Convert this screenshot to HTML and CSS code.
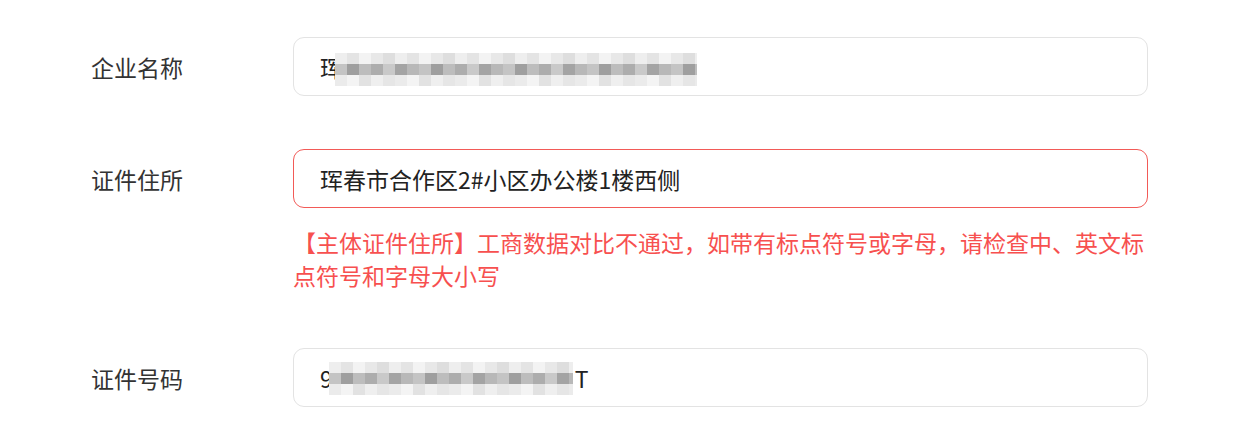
FILE: index.html
```html
<!DOCTYPE html>
<html lang="zh-CN">
<head>
  <meta charset="UTF-8">
  <title>企业信息</title>
  <link rel="stylesheet" href="styles.css">
</head>
<body>

  <div class="form">
    <div class="form-item">
      <label class="label">企业名称</label>
      <div class="field">
        <span class="value">珲</span>
        <span class="mosaic mosaic-name"></span>
      </div>
    </div>

    <div class="form-item">
      <label class="label">证件住所</label>
      <div class="field is-error">
        <span class="value">珲春市合作区2#小区办公楼1楼西侧</span>
      </div>
      <div class="error-msg">【主体证件住所】工商数据对比不通过，如带有标点符号或字母，请检查中、英文标点符号和字母大小写</div>
    </div>

    <div class="form-item">
      <label class="label">证件号码</label>
      <div class="field">
        <span class="value">9</span>
        <span class="mosaic mosaic-code"></span>
        <span class="value tail">T</span>
      </div>
    </div>
  </div>

</body>
</html>
```

FILE: styles.css
```css
:root {
  --text-color: #333333;
  --border: #e3e3e3;
  --danger: #f25a57;
  --danger-text: #f7504f;
}

body {
  margin: 0;
  background: #ffffff;
  font-family: "Noto Sans CJK SC", "Noto Sans", sans-serif;
  color: var(--text-color);
}

.form {
  padding: 37px 0 0 91px;
}

.form-item {
  display: grid;
  grid-template-columns: 202px 855px;
  margin-bottom: 53px;
}

.form-item:last-child {
  margin-bottom: 0;
}

.label {
  grid-column: 1;
  grid-row: 1;
  align-self: center;
  font-size: 23px;
  line-height: 30px;
  color: #333;
}

.field {
  grid-column: 2;
  grid-row: 1;
  box-sizing: border-box;
  height: 59px;
  border: 1px solid var(--border);
  border-radius: 11px;
  padding: 0 26px;
  display: flex;
  align-items: center;
  overflow: hidden;
}

.field.is-error {
  border-color: var(--danger);
}

.value {
  font-size: 23px;
  line-height: 30px;
  color: #222;
  white-space: nowrap;
}

.error-msg {
  grid-column: 2;
  grid-row: 2;
  padding: 18px 0 3px;
  font-size: 23px;
  line-height: 33px;
  color: var(--danger-text);
}

/* pixelated / blurred masking of sensitive data */
.mosaic {
  display: block;
  flex: none;
  height: 33px;
  background:
    repeating-linear-gradient(90deg, #eeeeee 0 12px, #e4e4e4 12px 24px, #f3f3f3 24px 36px, #e8e8e8 36px 48px, #dedede 48px 60px) 0 0 / 100% 11px no-repeat,
    repeating-linear-gradient(90deg, #c4c4c4 0 12px, #9f9f9f 12px 24px, #bdbdbd 24px 36px, #adadad 36px 48px, #c9c9c9 48px 60px, #a4a4a4 60px 72px, #b8b8b8 72px 84px) 0 11px / 100% 11px no-repeat,
    repeating-linear-gradient(90deg, #ebebeb 0 12px, #f4f4f4 12px 24px, #e2e2e2 24px 36px, #efefef 36px 48px, #e6e6e6 48px 60px) 0 22px / 100% 11px no-repeat;
  filter: blur(0.6px);
}

.mosaic-name {
  width: 362px;
  margin-left: -8px;
  margin-top: 6px;
}

.mosaic-code {
  width: 244px;
  margin-left: -4px;
  margin-top: 2px;
}

.tail {
  margin-left: 2px;
}
```
